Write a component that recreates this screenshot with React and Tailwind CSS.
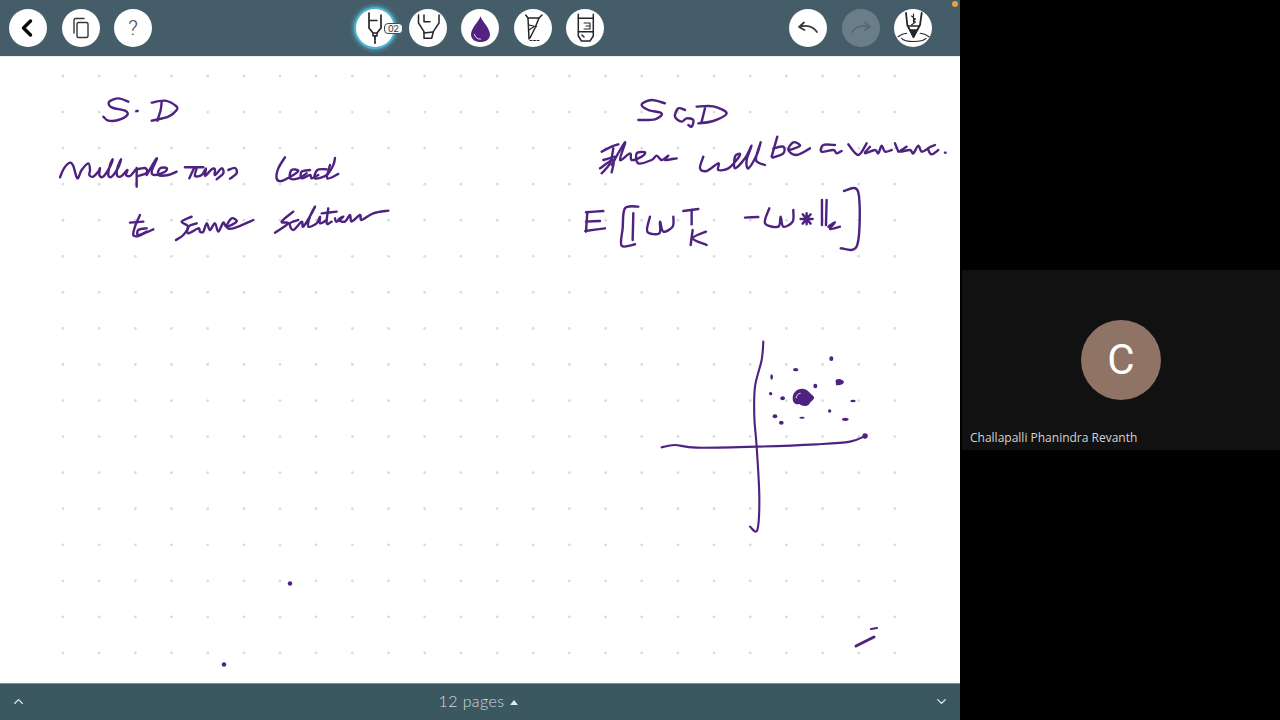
import { ChevronLeft, ChevronUp, ChevronDown } from 'lucide-react';

const INK = '#4e2280';

// point list -> catmull-rom path through every point
function smooth(pts) {
    let d = `M${pts[0][0]} ${pts[0][1]}`;
    for (let i = 0; i < pts.length - 1; i++) {
        const p0 = pts[i - 1] || pts[i];
        const p1 = pts[i];
        const p2 = pts[i + 1];
        const p3 = pts[i + 2] || p2;
        const c1x = p1[0] + (p2[0] - p0[0]) / 6;
        const c1y = p1[1] + (p2[1] - p0[1]) / 6;
        const c2x = p2[0] - (p3[0] - p1[0]) / 6;
        const c2y = p2[1] - (p3[1] - p1[1]) / 6;
        d += `C${c1x} ${c1y} ${c2x} ${c2y} ${p2[0]} ${p2[1]}`;
    }
    return d;
}

// ink strokes, coordinates are 3x board pixels relative to each group's origin
const leftNotes = [
    [[265,65],[235,55],[207,66],[215,82],[255,92],[262,105],[235,120],[205,122],[190,110]],
    [[289,93],[293,93]],
    [[365,65],[362,90],[352,122]],
    [[335,68],[375,62],[408,78],[410,90],[385,110],[335,122]],
    [[60,292],[72,265],[90,248],[100,258],[112,295],[125,270],[145,250],[150,270],[148,285],[160,290],[175,275],[180,265],[178,285],[190,290],[210,260],[218,238],[210,255],[205,285],[215,290],[235,262],[243,238],[232,265],[232,288],[245,288],[262,270],[258,285],[270,288],[285,272]],
    [[290,264],[290,320]],
    [[285,270],[315,264],[320,278],[295,288]],
    [[320,285],[345,242],[350,238],[335,275],[345,285],[375,275],[380,264],[360,265],[355,285],[385,285],[410,275]],
    [[435,262],[490,262]],
    [[462,265],[448,295]],
    [[470,265],[465,288],[485,285],[498,265],[495,288],[515,268],[525,268],[525,285],[545,265],[550,280],[530,298]],
    [[565,270],[585,264],[590,280],[570,296]],
    [[735,232],[715,265],[710,295],[725,303],[760,285],[775,272],[755,270],[750,295],[775,295],[800,280]],
    [[810,270],[785,275],[785,295],[810,285],[815,295],[835,285]],
    [[860,268],[832,270],[825,295],[860,285],[880,255],[885,234]],
    [[870,255],[862,295],[895,282]],
    [[300,405],[285,440],[280,465],[295,468],[320,455]],
    [[270,428],[310,425]],
    [[320,445],[295,450],[295,465],[325,455],[340,448]],
    [[455,410],[425,425],[445,440],[430,465],[408,480]],
    [[470,430],[445,440],[445,460],[475,445],[480,455],[490,455],[500,430],[510,450],[525,430],[535,455],[550,428],[560,440],[590,425],[575,415],[560,440],[580,445],[640,420]],
    [[760,395],[725,425],[745,430],[705,458]],
    [[775,420],[750,430],[760,450],[785,425],[790,440],[815,400],[825,380],[810,410],[805,440],[830,430],[840,410],[840,430],[860,420]],
    [[865,385],[860,430],[875,425]],
    [[845,400],[890,395]],
    [[885,415],[890,425],[910,410],[895,420],[915,425],[930,405],[935,425],[960,405],[965,420],[1000,400],[1045,392]],
];

const rightNotes = [
    [[285,55],[245,45],[215,58],[235,75],[275,85],[255,103],[205,105]],
    [[345,75],[325,70],[315,95],[335,110],[350,100],[370,105],[365,125],[355,120]],
    [[405,70],[395,110]],
    [[380,65],[430,64],[470,85],[430,108],[385,115]],
    [[95,200],[125,185],[145,178]],
    [[130,190],[120,235],[95,265]],
    [[90,250],[130,225],[125,262]],
    [[100,225],[135,215]],
    [[125,240],[165,172],[150,225],[180,205],[185,225],[215,215],[225,202],[200,205],[205,235],[245,225],[260,212],[275,225],[295,212],[285,225],[320,220]],
    [[400,215],[390,250],[410,258],[445,235],[445,255],[475,250],[500,225],[510,207],[495,215],[495,250],[525,220],[545,182],[530,225],[535,250],[560,210],[572,172],[558,225],[585,240]],
    [[622,155],[605,215]],
    [[610,190],[640,185],[640,205],[608,218]],
    [[660,195],[690,182],[670,172],[655,195],[680,210],[720,190]],
    [[795,180],[760,180],[755,200],[790,195],[800,205],[815,198]],
    [[835,178],[865,210],[890,175]],
    [[900,185],[885,205],[915,195],[925,205],[935,182],[945,200],[965,195]],
    [[975,175],[985,200]],
    [[1010,185],[990,200],[1020,195],[1030,205],[1045,182],[1055,200],[1075,190]],
    [[1095,180],[1075,190],[1085,208],[1105,195]],
    [[1125,203],[1127,203]],
    [[52,382],[48,440]],
    [[48,382],[100,378]],
    [[48,410],[90,408]],
    [[46,438],[105,430]],
    [[205,365],[165,370],[158,430],[155,482],[195,478]],
    [[190,385],[188,465]],
    [[240,395],[232,440],[268,445],[270,410],[280,440],[308,425],[310,395]],
    [[340,378],[385,372]],
    [[365,375],[365,418]],
    [[368,435],[362,480]],
    [[408,440],[368,460],[410,480]],
    [[525,398],[565,396]],
    [[598,370],[585,415],[625,425],[632,395],[640,425],[668,410],[670,375]],
    [[756,345],[756,420]],
    [[770,345],[768,420]],
    [[775,425],[795,412],[780,432],[810,425]],
    [[822,318],[865,322],[862,480],[812,490]],
];

const plotStrokes = [
    [[340,35],[335,90],[315,170],[313,260],[320,350],[328,500],[322,600],[300,590]],
    [[35,352],[75,345],[140,353],[320,350],[500,343],[600,335],[650,316]],
];

// scatter blobs around the cluster [x, y, rx, ry]
const plotDots = [[544,86,6,7],[437,119,8,5],[365,141,4,8],[496,168,6,7],[362,191,5,5],[398,205,7,6],[539,243,5,5],[375,259,7,6],[394,278,7,6],[456,263,8,3],[586,268,10,5],[609,213,8,4]];

function DotGrid() {
    const dots = [];
    for (let r = 0; r < 17; r++) {
        for (let c = 0; c < 24; c++) {
            dots.push(<circle key={`${r}-${c}`} cx={63 + c * 36.17} cy={76 + r * 36.06} r="1.4" fill="#d5dde0" />);
        }
    }
    return <g>{dots}</g>;
}

function Board() {
    const stroke = { fill: 'none', stroke: INK, strokeWidth: 7.2, strokeLinecap: 'round', strokeLinejoin: 'round' };
    return (
        <svg className="absolute inset-0 w-[960px] h-[626px]" viewBox="0 57 960 626" aria-label="Handwritten notes">
            <DotGrid />
            <g transform="translate(40 80) scale(0.3333)">
                {leftNotes.map((p, i) => <path key={i} d={smooth(p)} {...stroke} />)}
            </g>
            <g transform="translate(570 85) scale(0.3333)">
                {rightNotes.map((p, i) => <path key={i} d={smooth(p)} {...stroke} />)}
                <path d="M692 402L728 402M698 388L722 416M722 388L698 416M710 385L710 418" {...stroke} />
            </g>
            <g transform="translate(650 330) scale(0.3333)">
                {plotStrokes.map((p, i) => <path key={i} d={smooth(p)} {...stroke} strokeWidth={6.4} />)}
                {plotDots.map(([x, y, rx, ry], i) => <ellipse key={i} cx={x} cy={y} rx={rx} ry={ry} fill={INK} />)}
                <path d="M428 205C428 183 450 170 470 180C478 186 482 192 492 200C494 210 482 212 478 222C470 232 455 228 448 222C436 226 428 218 428 205Z" fill={INK} />
                <path d="M438 205C440 195 445 190 452 190" fill="none" stroke="#ffffff" strokeWidth="2.4" />
                <path d="M557 150C565 143 580 148 582 156C580 164 565 168 558 165Z" fill={INK} />
                <circle cx="645" cy="318" r="8" fill={INK} />
            </g>
            <path d="M856 646L874 637" fill="none" stroke={INK} strokeWidth="3" strokeLinecap="round" />
            <path d="M871 629L877 628" fill="none" stroke={INK} strokeWidth="2.2" strokeLinecap="round" />
            <circle cx="290" cy="583.5" r="2.2" fill={INK} />
            <circle cx="224" cy="664.5" r="2.2" fill={INK} />
        </svg>
    );
}

function Circle({ children, className = 'bg-white' }) {
    return <div className={`w-[38px] h-[38px] rounded-full flex items-center justify-center shrink-0 ${className}`}>{children}</div>;
}

function Pen({ children }) {
    return (
        <svg width="38" height="38" viewBox="0 0 38 38" fill="none" stroke="#26262b" strokeWidth="1.5" strokeLinecap="round" strokeLinejoin="round">
            {children}
        </svg>
    );
}

export default function App() {
    return (
        <div className="w-[1280px] h-[720px] flex bg-black overflow-hidden">
            <div className="w-[960px] h-full flex flex-col relative">
                <div className="h-[57px] bg-[#445d68] flex items-center pl-[9px] shrink-0 border-b border-[#e6eef2]">
                    <div className="flex gap-[14.5px]">
                        <Circle><ChevronLeft size={28} strokeWidth={3} color="#0b0b0b" className="-ml-0.5" /></Circle>
                        <Circle>
                            <svg width="20" height="22" viewBox="0 0 20 22" fill="none" stroke="#33363a" strokeWidth="1.4" strokeLinecap="round" strokeLinejoin="round">
                                <path d="M13 1.5H4.5A1.5 1.5 0 0 0 3 3v13" />
                                <rect x="6" y="5.5" width="11" height="15" rx="1.5" />
                            </svg>
                        </Circle>
                        <Circle><span className="font-['Roboto',sans-serif] font-light text-[21px] leading-none text-[#44484c]">?</span></Circle>
                    </div>

                    <div className="flex gap-[14.5px] ml-[204px] relative">
                        <Circle className="bg-white shadow-[0_0_0_2px_#49b5d1,0_0_5px_2px_#5cc3dc]">
                            <Pen>
                                <path d="M13 4V19L17 24H21L25 19V6" strokeWidth="1.7" />
                                <path d="M14 11.5H21" />
                                <path d="M17 24V27H21V24" />
                                <path d="M19 27V31M19 32.5V34" strokeWidth="1.8" />
                            </Pen>
                        </Circle>
                        <Circle>
                            <Pen>
                                <path d="M9.5 6V14L15 22.7V29.3H22.7L24.3 22.7L30 14V6" />
                                <path d="M15 6V12.7H21" />
                                <path d="M15 24L24 23" />
                            </Pen>
                        </Circle>
                        <Circle>
                            <svg width="38" height="38" viewBox="0 0 38 38">
                                <path d="M19.5 7C19 11 10 19 10 25.5C10 30.5 14.5 33 19.5 33C24.5 33 29 30.5 29 25.5C29 19 20 11 19.5 7Z" fill="#53237f" />
                                <path d="M13.5 25.5C14 28.5 16.5 30.2 19.5 30.2" fill="none" stroke="#ffffff" strokeWidth="0.9" strokeLinecap="round" />
                            </svg>
                        </Circle>
                        <Circle>
                            <Pen>
                                <path d="M11.7 6L14 9H25L28 6" />
                                <path d="M14 9L15 30M25 9L21 19L16 29" />
                                <path d="M15 16L22.7 17.7M15 21L19.5 18" strokeWidth="1.1" />
                                <path d="M16 31.5H18M19.5 31.5H21.5M23 31.5H25" strokeWidth="1.1" />
                            </Pen>
                        </Circle>
                        <Circle>
                            <Pen>
                                <path d="M12.3 5.3V27L15.5 32H24L27.3 27V5.3" />
                                <path d="M12.3 9.3H27.3M12.3 22.7H27.3" />
                                <path d="M18 14H24V20M20 17H24M18 20H24" strokeWidth="1.1" />
                                <path d="M16 26L18 28" />
                            </Pen>
                        </Circle>
                        <span className="absolute left-[28px] top-[14px] h-[11px] w-[19px] rounded-[4px] bg-[#f4f6f7] border border-[#3f4f57] text-[9px] leading-[9px] text-center text-[#33363a] font-['Lato',sans-serif]">02</span>
                    </div>

                    <div className="flex gap-[14.5px] ml-[185px]">
                        <Circle>
                            <svg width="22" height="14" viewBox="0 0 22 14" fill="none" stroke="#33363a" strokeWidth="1.7" strokeLinecap="round" strokeLinejoin="round">
                                <path d="M7 1.5L2 6L7.5 9M2.5 6C9 3.5 16 5 20 11" />
                            </svg>
                        </Circle>
                        <Circle className="bg-[#6a7e88]">
                            <svg width="22" height="14" viewBox="0 0 22 14" fill="none" stroke="#55696f" strokeWidth="1.7" strokeLinecap="round" strokeLinejoin="round">
                                <path d="M15 1.5L20 6L14.5 9M19.5 6C13 3.5 6 5 2 11" />
                            </svg>
                        </Circle>
                        <Circle>
                            <Pen>
                                <path d="M12 4L13.3 16L19.5 28L26 16L27.7 4" strokeWidth="1.8" />
                                <path d="M14 17H25" strokeWidth="1.6" />
                                <path d="M16.5 21H22.5L19.5 28Z" fill="#26262b" />
                                <path d="M17.5 7L21.5 10L19.5 11.5L21.5 13L17.5 16M19.5 5V13" strokeWidth="1.1" />
                                <path d="M4 27.7C7 25.5 10 24.5 12.7 24.3M35 27.7C32 25.5 29 24.5 26.3 24.3M7.7 29.3C11 33.5 28 33.5 32 29.3" strokeWidth="1.1" />
                            </Pen>
                        </Circle>
                    </div>

                    <span className="absolute left-[952px] top-[1px] w-[6px] h-[6px] rounded-full bg-[#e8a13c]" />
                </div>

                <div className="flex-1 bg-white relative">
                    <Board />
                </div>

                <div className="h-[37px] bg-[#3b5760] border-t border-[#7c9099] flex items-center justify-between px-[11px] pb-[2px] shrink-0">
                    <ChevronUp size={15} color="#e4ecef" strokeWidth={2.2} />
                    <div className="flex items-center gap-[6px] text-[#cfdce1] text-[16px] font-['Lato',sans-serif] font-light tracking-[0.4px] -ml-[3px]">
                        12 pages
                        <span className="w-0 h-0 border-x-[4.5px] border-x-transparent border-b-[5px] border-b-[#dfe8eb] mt-[3px]" />
                    </div>
                    <ChevronDown size={15} color="#e4ecef" strokeWidth={2.2} />
                </div>
            </div>

            <div className="w-[320px] h-full flex flex-col justify-center pl-[2px]">
                <div className="h-[180px] bg-[#111111] flex flex-col items-center pt-[50px]">
                    <div className="w-20 h-20 rounded-full bg-[#8f7466] flex items-center justify-center text-white text-[42px] leading-none font-['Roboto',sans-serif]">C</div>
                    <div className="self-start ml-[8px] mt-[30px] text-[12px] leading-4 text-[#d4d4d4] font-['Open_Sans',sans-serif]">Challapalli Phanindra Revanth</div>
                </div>
            </div>
        </div>
    );
}
